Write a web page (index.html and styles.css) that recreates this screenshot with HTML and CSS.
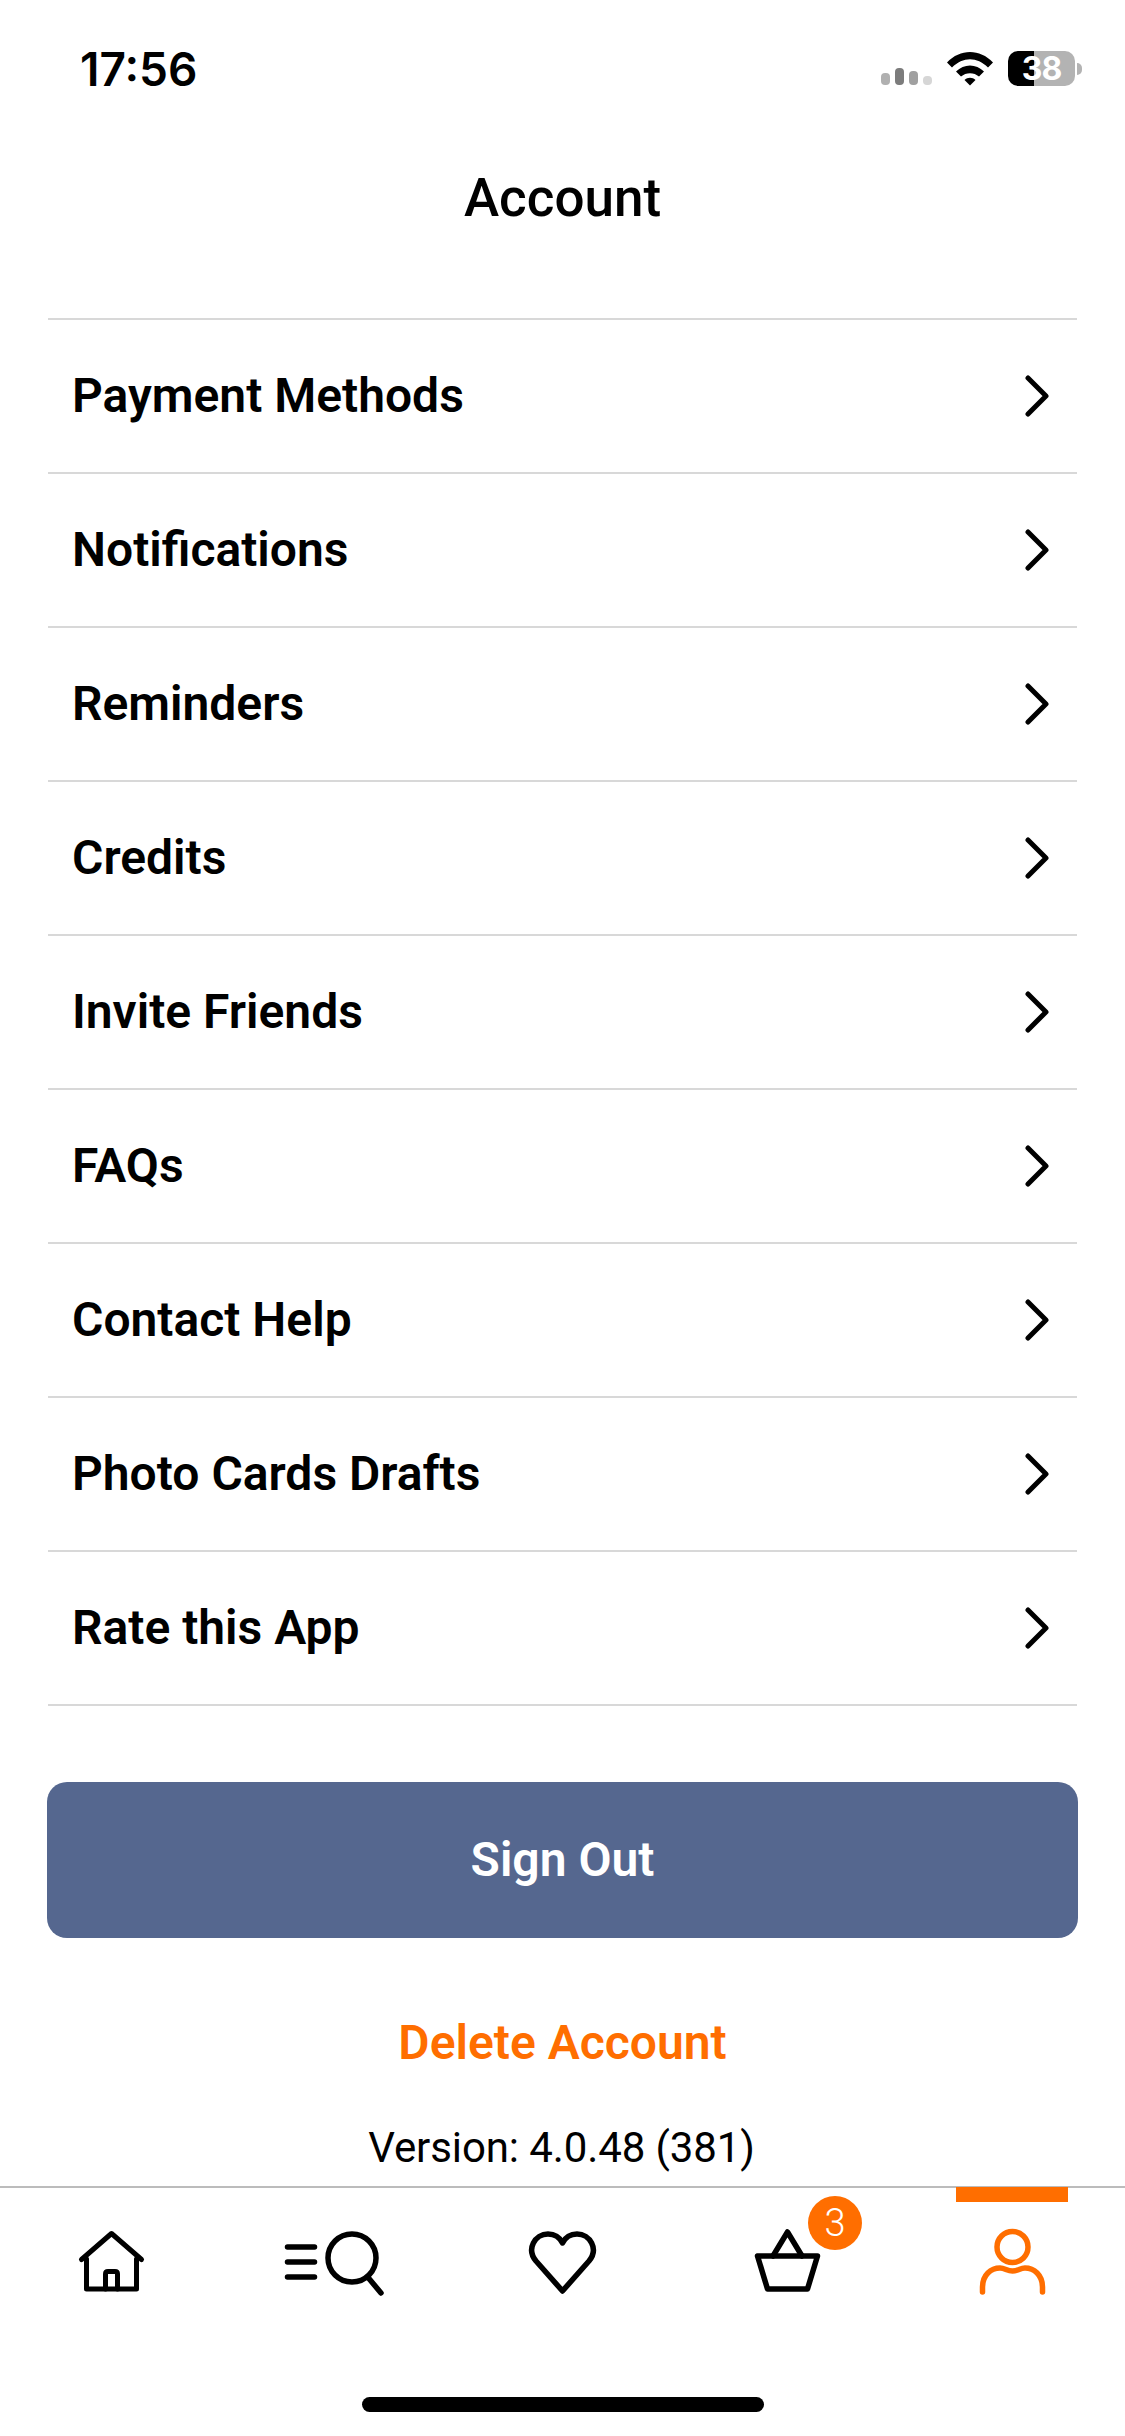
FILE: index.html
```html
<!DOCTYPE html>
<html lang="en">
<head>
<meta charset="utf-8">
<title>Account</title>
<link rel="stylesheet" href="styles.css">
</head>
<body>
<div class="screen">
  <div class="status">
    <span class="time">17:56</span>
    <div class="status-right">
      <div class="signal"><i class="b1"></i><i class="b2"></i><i class="b3"></i><i class="b4"></i></div>
      <svg class="wifi" width="46" height="34" viewBox="0 0 46 34"><path d="M0 10.5C13-3.5 33-3.5 46 10.5L41 15.5C30 4.5 16 4.5 5 15.5Z"/><path d="M9 19.5C17 11.5 29 11.5 37 19.5L32 24.5C27 20 19 20 14 24.5Z"/><path d="M17.5 28C20.5 25 25.5 25 28.5 28L23 33.5Z"/></svg>
      <div class="battery"><span class="battery-level">38</span></div>
      <span class="battery-tip"></span>
    </div>
  </div>
  <header class="title">Account</header>
  <ul class="menu">
    <li class="row"><span>Payment Methods</span><svg class="chev" width="24" height="44" viewBox="0 0 24 44"><path d="M3 4L21 22L3 40"/></svg></li>
    <li class="row"><span>Notifications</span><svg class="chev" width="24" height="44" viewBox="0 0 24 44"><path d="M3 4L21 22L3 40"/></svg></li>
    <li class="row"><span>Reminders</span><svg class="chev" width="24" height="44" viewBox="0 0 24 44"><path d="M3 4L21 22L3 40"/></svg></li>
    <li class="row"><span>Credits</span><svg class="chev" width="24" height="44" viewBox="0 0 24 44"><path d="M3 4L21 22L3 40"/></svg></li>
    <li class="row"><span>Invite Friends</span><svg class="chev" width="24" height="44" viewBox="0 0 24 44"><path d="M3 4L21 22L3 40"/></svg></li>
    <li class="row"><span>FAQs</span><svg class="chev" width="24" height="44" viewBox="0 0 24 44"><path d="M3 4L21 22L3 40"/></svg></li>
    <li class="row"><span>Contact Help</span><svg class="chev" width="24" height="44" viewBox="0 0 24 44"><path d="M3 4L21 22L3 40"/></svg></li>
    <li class="row"><span>Photo Cards Drafts</span><svg class="chev" width="24" height="44" viewBox="0 0 24 44"><path d="M3 4L21 22L3 40"/></svg></li>
    <li class="row"><span>Rate this App</span><svg class="chev" width="24" height="44" viewBox="0 0 24 44"><path d="M3 4L21 22L3 40"/></svg></li>
  </ul>
  <button class="signout">Sign Out</button>
  <div class="delete">Delete Account</div>
  <div class="version">Version: 4.0.48 (381)</div>
  <nav class="tabs">
    <div class="tab">
      <svg class="icon icon-thin" width="80" height="80" viewBox="0 0 80 80"><path d="M8.5 37.5L38.5 11.5L68.5 37.5"/><path d="M13.5 37V67H63.5V37"/><path d="M32.5 67V52Q32.5 49.5 35 49.5H42Q44.5 49.5 44.5 52V67"/></svg>
    </div>
    <div class="tab">
      <svg class="icon" width="110" height="80" viewBox="0 0 110 80"><path d="M4.5 25H31.5M4.5 40H31.5M4.5 55H31.5"/><circle cx="69" cy="36" r="24"/><path d="M85.5 56L98 71"/></svg>
    </div>
    <div class="tab">
      <svg class="icon" width="80" height="80" viewBox="0 0 80 80"><path d="M39.5 69L13 39C3 27 12 12 25 12C32 12 37 16 39.5 21C42 16 47 12 54 12C67 12 76 27 66 39Z"/></svg>
    </div>
    <div class="tab">
      <svg class="icon" width="80" height="80" viewBox="0 0 80 80"><path d="M9.5 34H69.5L59.5 67H19.5Z"/><path d="M25 34L39.5 10L54 34"/></svg>
      <span class="badge">3</span>
    </div>
    <div class="tab">
      <span class="active-bar"></span>
      <svg class="icon icon-active" width="80" height="80" viewBox="0 0 80 80"><circle cx="39.5" cy="25" r="15.5"/><path d="M9.5 70V65C9.5 53 18 46 27 46C32 46 34 49 39.5 49C45 49 47 46 52 46C61 46 69.5 53 69.5 65V70"/></svg>
    </div>
    <span class="home-bar"></span>
  </nav>
</div>
</body>
</html>
```
FILE: styles.css
```css
* { box-sizing: border-box; }
html, body { margin: 0; padding: 0; background: #fff; }
body { font-family: Roboto, "Liberation Sans", sans-serif; color: #000; }
.screen { width: 1125px; height: 2436px; display: flex; flex-direction: column; overflow: hidden; background: #fff; }

.status { height: 136px; padding: 46px 43px 0 80px; display: flex; justify-content: space-between; align-items: flex-start; }
.time { font-family: Inter, Roboto, sans-serif; font-weight: 600; font-size: 46px; line-height: 46px; }
.status-right { display: flex; align-items: flex-start; padding-top: 5px; }
.signal { display: flex; align-items: flex-end; gap: 5px; height: 34px; margin-right: 15px; }
.signal i { display: block; width: 9px; border-radius: 4px; }
.signal .b1 { height: 12px; background: #b0b0b0; }
.signal .b2 { height: 17px; background: #7c7c7c; }
.signal .b3 { height: 14px; background: #a0a0a0; }
.signal .b4 { height: 9px; background: #d6d6d6; }
.wifi { margin-top: 1px; margin-right: 15px; fill: #000; }
.battery { width: 67px; height: 35px; border-radius: 10px; background: linear-gradient(90deg, #000 26px, #b3b3b3 26px); display: flex; align-items: center; justify-content: center; color: #fff; font-family: Inter, Roboto, sans-serif; font-weight: 700; font-size: 32px; letter-spacing: -1px; }
.battery-level { display: block; line-height: 35px; }
.battery-tip { width: 5px; height: 12px; margin: 12px 0 0 2px; background: #b3b3b3; border-radius: 0 6px 6px 0; }

.title { height: 182px; padding-top: 30px; text-align: center; font-size: 53px; line-height: 64px; font-weight: 500; }

.menu { list-style: none; margin: 0 48px; padding: 0; border-top: 2px solid #d8d8d8; }
.row { height: 154px; border-bottom: 2px solid #d8d8d8; padding: 0 28px 2px 24px; display: flex; align-items: center; justify-content: space-between; font-size: 48px; font-weight: 600; }
.chev { margin-top: 2px; fill: none; stroke: #000; stroke-width: 5; stroke-linecap: round; stroke-linejoin: round; }

.signout { display: block; margin: 76px 47px 0; height: 156px; width: 1031px; border: 0; border-radius: 20px; padding: 0 0 2px; background: #55678f; color: #fff; font-family: inherit; font-size: 48px; font-weight: 600; }
.delete { margin-top: 75px; text-align: center; color: #ff6e00; font-size: 48px; font-weight: 600; line-height: 60px; }
.version { margin-top: 45px; padding-right: 2px; text-align: center; font-size: 42px; letter-spacing: -0.1px; line-height: 60px; }

.tabs { position: relative; margin-top: auto; height: 250px; border-top: 2px solid #bcbcbc; display: flex; }
.tab { position: relative; width: 225px; padding-top: 34px; display: flex; justify-content: center; align-items: flex-start; }
.icon { fill: none; stroke: #000; stroke-width: 5.5; stroke-linecap: round; stroke-linejoin: round; }
.icon-thin { stroke-width: 5; }
.icon-active { stroke: #ff6e00; }
.badge { position: absolute; left: 133px; top: 8px; width: 54px; height: 54px; border-radius: 50%; background: #ff6e00; color: #fff; font-size: 38px; font-weight: 300; line-height: 54px; text-align: center; }
.active-bar { position: absolute; left: 56px; top: -1px; width: 112px; height: 15px; background: #ff6e00; }
.home-bar { position: absolute; left: 362px; top: 209px; width: 402px; height: 15px; border-radius: 8px; background: #000; }
```
